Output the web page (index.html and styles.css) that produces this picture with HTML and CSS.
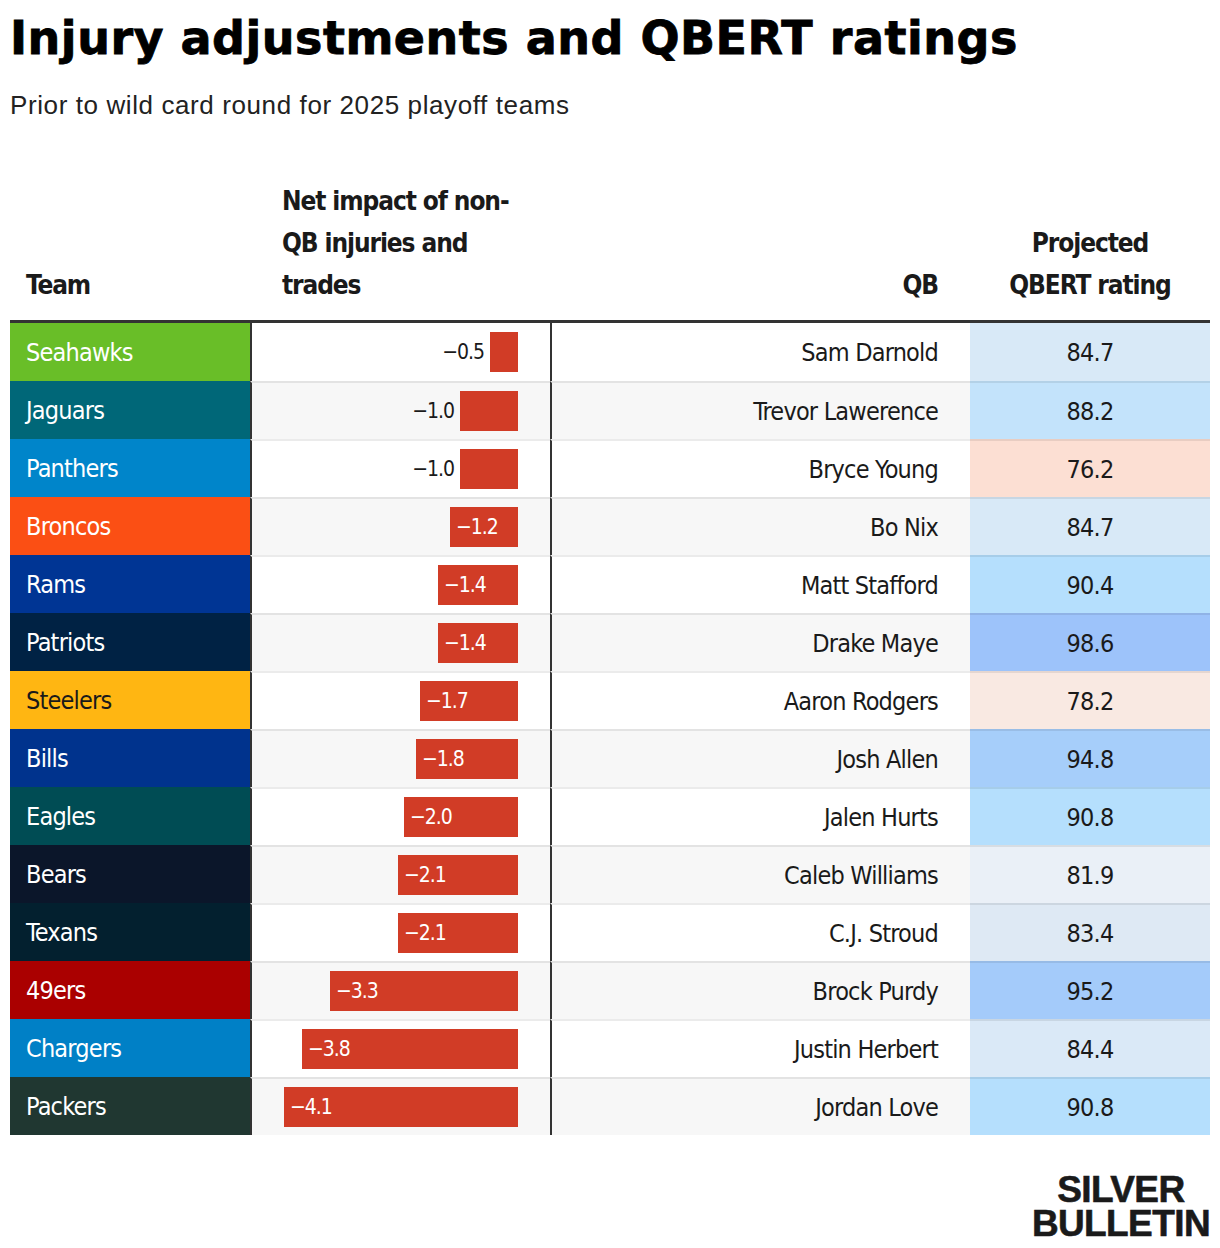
FILE: index.html
```html
<!DOCTYPE html>
<html lang="en">
<head>
<meta charset="utf-8">
<title>Injury adjustments and QBERT ratings</title>
<link rel="stylesheet" href="styles.css">
</head>
<body>
<div class="page">
  <h1 class="title">Injury adjustments and QBERT ratings</h1>
  <p class="subtitle">Prior to wild card round for 2025 playoff teams</p>

  <div class="table">
    <div class="row head">
      <div class="cell c-team"><span class="hd">Team</span></div>
      <div class="cell c-bar"><span class="hd">Net impact of non-<br>QB injuries and<br>trades</span></div>
      <div class="cell c-qb"><span class="hd">QB</span></div>
      <div class="cell c-rate"><span class="hd">Projected<br>QBERT rating</span></div>
    </div>

    <div class="row">
      <div class="cell c-team t-sea">Seahawks</div>
      <div class="cell c-bar"><span class="lbl out">−0.5</span><span class="bar" style="width:28px"></span></div>
      <div class="cell c-qb">Sam Darnold</div>
      <div class="cell c-rate" style="background:#d8e9f7">84.7</div>
    </div>
    <div class="row alt">
      <div class="cell c-team t-jax">Jaguars</div>
      <div class="cell c-bar"><span class="lbl out">−1.0</span><span class="bar" style="width:58px"></span></div>
      <div class="cell c-qb">Trevor Lawerence</div>
      <div class="cell c-rate" style="background:#c3e3fb">88.2</div>
    </div>
    <div class="row">
      <div class="cell c-team t-car">Panthers</div>
      <div class="cell c-bar"><span class="lbl out">−1.0</span><span class="bar" style="width:58px"></span></div>
      <div class="cell c-qb">Bryce Young</div>
      <div class="cell c-rate" style="background:#fcdfd3">76.2</div>
    </div>
    <div class="row alt">
      <div class="cell c-team t-den">Broncos</div>
      <div class="cell c-bar"><span class="bar" style="width:68px"><span class="lbl in">−1.2</span></span></div>
      <div class="cell c-qb">Bo Nix</div>
      <div class="cell c-rate" style="background:#d8e9f7">84.7</div>
    </div>
    <div class="row">
      <div class="cell c-team t-lar">Rams</div>
      <div class="cell c-bar"><span class="bar" style="width:80px"><span class="lbl in">−1.4</span></span></div>
      <div class="cell c-qb">Matt Stafford</div>
      <div class="cell c-rate" style="background:#b5dffd">90.4</div>
    </div>
    <div class="row alt">
      <div class="cell c-team t-ne">Patriots</div>
      <div class="cell c-bar"><span class="bar" style="width:80px"><span class="lbl in">−1.4</span></span></div>
      <div class="cell c-qb">Drake Maye</div>
      <div class="cell c-rate" style="background:#9dc3fa">98.6</div>
    </div>
    <div class="row">
      <div class="cell c-team t-pit">Steelers</div>
      <div class="cell c-bar"><span class="bar" style="width:98px"><span class="lbl in">−1.7</span></span></div>
      <div class="cell c-qb">Aaron Rodgers</div>
      <div class="cell c-rate" style="background:#f9e9e2">78.2</div>
    </div>
    <div class="row alt">
      <div class="cell c-team t-buf">Bills</div>
      <div class="cell c-bar"><span class="bar" style="width:102px"><span class="lbl in">−1.8</span></span></div>
      <div class="cell c-qb">Josh Allen</div>
      <div class="cell c-rate" style="background:#a6cefa">94.8</div>
    </div>
    <div class="row">
      <div class="cell c-team t-phi">Eagles</div>
      <div class="cell c-bar"><span class="bar" style="width:114px"><span class="lbl in">−2.0</span></span></div>
      <div class="cell c-qb">Jalen Hurts</div>
      <div class="cell c-rate" style="background:#b5dffd">90.8</div>
    </div>
    <div class="row alt">
      <div class="cell c-team t-chi">Bears</div>
      <div class="cell c-bar"><span class="bar" style="width:120px"><span class="lbl in">−2.1</span></span></div>
      <div class="cell c-qb">Caleb Williams</div>
      <div class="cell c-rate" style="background:#eaf0f7">81.9</div>
    </div>
    <div class="row">
      <div class="cell c-team t-hou">Texans</div>
      <div class="cell c-bar"><span class="bar" style="width:120px"><span class="lbl in">−2.1</span></span></div>
      <div class="cell c-qb">C.J. Stroud</div>
      <div class="cell c-rate" style="background:#dee9f4">83.4</div>
    </div>
    <div class="row alt">
      <div class="cell c-team t-sf">49ers</div>
      <div class="cell c-bar"><span class="bar" style="width:188px"><span class="lbl in">−3.3</span></span></div>
      <div class="cell c-qb">Brock Purdy</div>
      <div class="cell c-rate" style="background:#a4cbfa">95.2</div>
    </div>
    <div class="row">
      <div class="cell c-team t-lac">Chargers</div>
      <div class="cell c-bar"><span class="bar" style="width:216px"><span class="lbl in">−3.8</span></span></div>
      <div class="cell c-qb">Justin Herbert</div>
      <div class="cell c-rate" style="background:#dae9f7">84.4</div>
    </div>
    <div class="row alt">
      <div class="cell c-team t-gb">Packers</div>
      <div class="cell c-bar"><span class="bar" style="width:234px"><span class="lbl in">−4.1</span></span></div>
      <div class="cell c-qb">Jordan Love</div>
      <div class="cell c-rate" style="background:#b5dffd">90.8</div>
    </div>
  </div>

  <div class="footer">
    <div class="logo"><span class="logo-line">SILVER</span><span class="logo-line">BULLETIN</span></div>
  </div>
</div>
</body>
</html>
```

FILE: styles.css
```css
* { box-sizing: border-box; }
html, body { margin: 0; padding: 0; background: #fff; }
body { color: #1a1a1a; }

.page {
  width: 1220px;
  padding: 0 10px;
}

.title {
  margin: 0;
  padding-top: 10px;
  font-family: "DejaVu Sans", "Liberation Sans", sans-serif;
  font-weight: bold;
  font-size: 46px;
  line-height: 56px;
  color: #000;
  -webkit-text-stroke: 0.8px #000;
  letter-spacing: 0.5px;
}

.subtitle {
  margin: 24px 0 0 0;
  font-family: "Liberation Sans", Arial, sans-serif;
  font-size: 26px;
  line-height: 30px;
  letter-spacing: 0.6px;
  color: #222;
}

.table {
  margin-top: 50px;
  width: 1200px;
  font-family: "DejaVu Sans Condensed", "DejaVu Sans", sans-serif;
  font-stretch: condensed;
}

.row {
  display: grid;
  grid-template-columns: 240px 300px 420px 240px;
  height: 58px;
}
.row.alt .c-bar, .row.alt .c-qb { background: #f7f7f7; }

.cell {
  display: flex;
  align-items: center;
  font-size: 25px;
  letter-spacing: -0.8px;
  color: #1a1a1a;
}

.row + .row .c-bar,
.row + .row .c-qb,
.row + .row .c-rate {
  border-top: 2px solid rgba(0, 0, 0, 0.08);
}
.head + .row .c-bar,
.head + .row .c-qb,
.head + .row .c-rate { border-top: none; }

.head {
  height: 153px;
  border-bottom: 3px solid #333;
}
.head .cell {
  align-items: flex-end;
  font-weight: bold;
  font-size: 26px;
  line-height: 42px;
  letter-spacing: -1.1px;
  padding-bottom: 14px;
  color: #1a1a1a;
}
.hd { display: block; white-space: nowrap; }
.head .c-bar { border-left: none; padding-left: 32px; padding-right: 0; justify-content: flex-start; }
.head .c-qb { border-left: none; }
.head .c-team { padding-left: 16px; color: #1a1a1a; }
.head .c-rate { text-align: center; }

.c-team {
  padding-left: 16px;
  color: #fff;
}
.c-bar {
  border-left: 2px solid #333;
  justify-content: flex-end;
  padding-right: 32px;
}
.c-qb {
  border-left: 2px solid #333;
  justify-content: flex-end;
  padding-right: 32px;
}
.c-rate {
  justify-content: center;
  text-align: center;
}

.bar {
  display: flex;
  align-items: center;
  height: 40px;
  background: #d13c26;
}
.lbl {
  font-size: 21px;
  letter-spacing: -1px;
}
.lbl.out { color: #1a1a1a; margin-right: 6px; }
.lbl.in { color: #fff; padding-left: 6px; }

.t-sea { background: #69be28; }
.t-jax { background: #006778; }
.t-car { background: #0085ca; }
.t-den { background: #fb4f14; }
.t-lar { background: #003594; }
.t-ne  { background: #002244; }
.t-pit { background: #ffb612; color: #1a1a1a; }
.t-buf { background: #00338d; }
.t-phi { background: #004c54; }
.t-chi { background: #0b162a; }
.t-hou { background: #03202f; }
.t-sf  { background: #aa0000; }
.t-lac { background: #0080c6; }
.t-gb  { background: #203731; }

.footer {
  display: flex;
  justify-content: flex-end;
  margin-top: 38px;
}
.logo {
  display: flex;
  flex-direction: column;
  align-items: center;
  font-family: "Liberation Sans", Arial, sans-serif;
  font-weight: 900;
  font-size: 37px;
  letter-spacing: -0.6px;
  color: #1a1a1a;
  -webkit-text-stroke: 0.6px #1a1a1a;
}
.logo-line {
  display: block;
  height: 34px;
  line-height: 34px;
}
```
